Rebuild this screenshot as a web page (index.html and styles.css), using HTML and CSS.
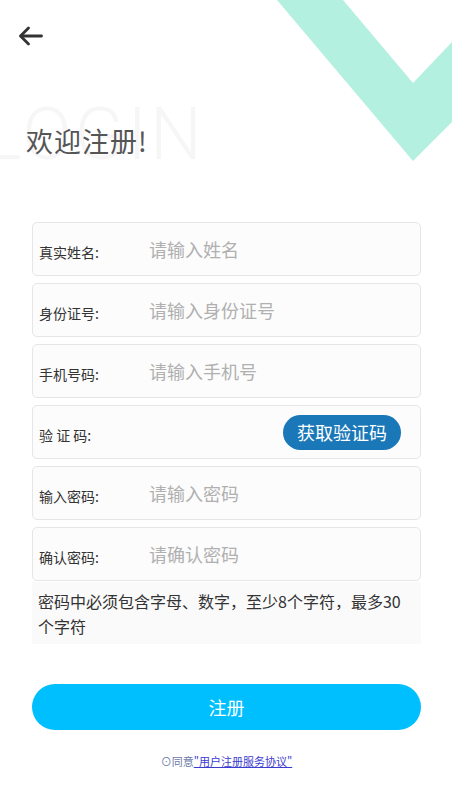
FILE: index.html
```html
<!DOCTYPE html>
<html lang="zh">
<head>
<meta charset="utf-8">
<title>注册</title>
<link rel="stylesheet" href="styles.css">
</head>
<body>
<div class="page">
  <svg class="deco" width="175" height="165" viewBox="0 0 175 165">
    <polygon points="0,0 66,0 136,83 175,42 175,122 136,161" fill="#b3f0df"/>
  </svg>

  <div class="topbar">
    <svg class="back" width="26" height="20" viewBox="0 0 26 20">
      <polyline points="10.5,2 2.5,10 10.5,18" fill="none" stroke="#333" stroke-width="2.8" stroke-linecap="round" stroke-linejoin="round"/>
      <line x1="3" y1="10" x2="23.5" y2="10" stroke="#333" stroke-width="2.8" stroke-linecap="round"/>
    </svg>
  </div>

  <div class="hero">
    <div class="watermark">LOGIN</div>
    <h1 class="title">欢迎注册!</h1>
  </div>

  <form class="form">
    <div class="field">
      <span class="label">真实姓名:</span>
      <span class="placeholder">请输入姓名</span>
    </div>
    <div class="field">
      <span class="label">身份证号:</span>
      <span class="placeholder">请输入身份证号</span>
    </div>
    <div class="field">
      <span class="label">手机号码:</span>
      <span class="placeholder">请输入手机号</span>
    </div>
    <div class="field field-code">
      <span class="label">验 证 码:</span>
      <span class="code-btn">获取验证码</span>
    </div>
    <div class="field">
      <span class="label">输入密码:</span>
      <span class="placeholder">请输入密码</span>
    </div>
    <div class="field">
      <span class="label">确认密码:</span>
      <span class="placeholder">请确认密码</span>
    </div>
    <p class="hint">密码中必须包含字母、数字，至少8个字符，最多30个字符</p>

    <div class="submit">注册</div>

    <p class="agree"><span class="radio">⊙</span>同意<a class="link" href="#">"用户注册服务协议"</a></p>
  </form>
</div>
</body>
</html>
```

FILE: styles.css
```css
html, body {
  margin: 0;
  padding: 0;
  background: #ffffff;
}

body {
  font-family: "Noto Sans CJK SC", "Noto Sans", "Liberation Sans", sans-serif;
  color: #333;
}

.page {
  position: relative;
  width: 452px;
  height: 797px;
  overflow: hidden;
}

.deco {
  position: absolute;
  top: 0;
  left: 277px;
}

.topbar {
  padding: 26px 0 0 18px;
  height: 20px;
}

.back {
  display: block;
}

.hero {
  position: relative;
  height: 176px;
}

.watermark {
  position: absolute;
  left: -17px;
  top: 52px;
  font-family: Roboto, "Liberation Sans", sans-serif;
  font-weight: 300;
  font-size: 73px;
  line-height: 73px;
  letter-spacing: 3px;
  color: #f6f6f6;
}

.title {
  position: relative;
  margin: 0;
  padding: 80px 0 0 26px;
  font-size: 27px;
  line-height: 30px;
  font-weight: 400;
  letter-spacing: 1px;
  color: #555;
}

.form {
  margin: 0 31px 0 32px;
  display: flex;
  flex-direction: column;
}

.field {
  box-sizing: border-box;
  height: 54px;
  margin-bottom: 7px;
  border: 1px solid #e6e6e6;
  border-radius: 5px;
  background: #fcfcfc;
  display: flex;
  align-items: center;
  padding: 0 6px;
}

.label {
  width: 110px;
  flex: none;
  font-size: 14px;
  color: #333;
  padding-top: 5px;
}

.placeholder {
  font-size: 18px;
  color: #b0b0b0;
}

.field-code {
  justify-content: space-between;
  padding-right: 19px;
}

.code-btn {
  height: 35px;
  line-height: 35px;
  padding: 0 14px;
  border-radius: 18px;
  background: #1a78b8;
  color: #fff;
  font-size: 18px;
  margin-top: 1px;
}

.hint {
  margin: -6px 0 0 0;
  padding: 7px 6px 5px 6px;
  background: #fafafa;
  font-size: 16px;
  line-height: 25px;
  color: #333;
}

.submit {
  margin-top: 40px;
  height: 46px;
  line-height: 46px;
  border-radius: 23px;
  background: #00bfff;
  color: #fff;
  text-align: center;
  font-size: 18px;
}

.agree {
  margin: 23px 0 0 0;
  text-align: center;
  font-size: 11px;
  line-height: 16px;
  color: #6a7aa8;
}

.radio {
  font-size: 11px;
}

.link {
  color: #3b3bd0;
  text-decoration: underline;
}
```
